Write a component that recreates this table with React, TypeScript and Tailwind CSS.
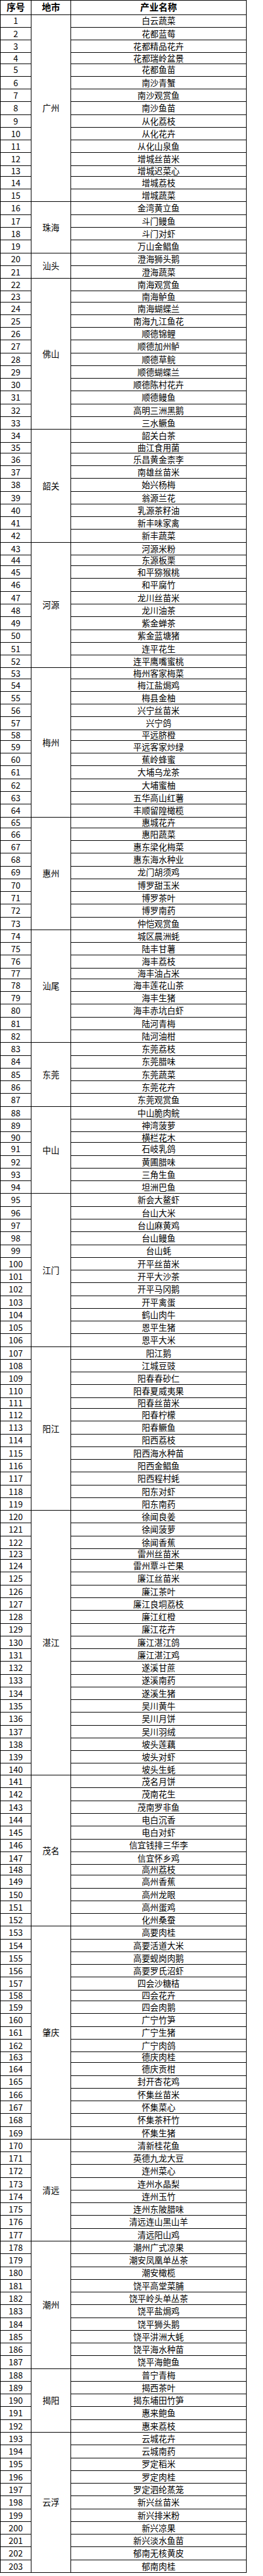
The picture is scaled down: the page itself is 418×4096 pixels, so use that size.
import React from "react";

type Group = { city: string; start: number; items: string[] };

const groups: Group[] = [
  { city: "广州", start: 1, items: ["白云蔬菜", "花都蓝莓", "花都精品花卉", "花都瑞岭盆景", "花都鱼苗", "南沙青蟹", "南沙观赏鱼", "南沙鱼苗", "从化荔枝", "从化花卉", "从化山泉鱼", "增城丝苗米", "增城迟菜心", "增城荔枝", "增城蔬菜"] },
  { city: "珠海", start: 16, items: ["金湾黄立鱼", "斗门鳗鱼", "斗门对虾", "万山金鲳鱼"] },
  { city: "汕头", start: 20, items: ["澄海狮头鹅", "澄海蔬菜"] },
  { city: "佛山", start: 22, items: ["南海观赏鱼", "南海鲈鱼", "南海蝴蝶兰", "南海九江鱼花", "顺德锦鲤", "顺德加州鲈", "顺德草鲩", "顺德蝴蝶兰", "顺德陈村花卉", "顺德鳗鱼", "高明三洲黑鹅", "三水鳜鱼"] },
  { city: "韶关", start: 34, items: ["韶关白茶", "曲江食用菌", "乐昌黄金柰李", "南雄丝苗米", "始兴杨梅", "翁源兰花", "乳源茶籽油", "新丰味家禽", "新丰蔬菜"] },
  { city: "河源", start: 43, items: ["河源米粉", "东源板栗", "和平猕猴桃", "和平腐竹", "龙川丝苗米", "龙川油茶", "紫金蝉茶", "紫金蓝塘猪", "连平花生", "连平鹰嘴蜜桃"] },
  { city: "梅州", start: 53, items: ["梅州客家梅菜", "梅江盐焗鸡", "梅县金柚", "兴宁丝苗米", "兴宁鸽", "平远脐橙", "平远客家炒绿", "蕉岭蜂蜜", "大埔乌龙茶", "大埔蜜柚", "五华高山红薯", "丰顺留隍橄榄"] },
  { city: "惠州", start: 65, items: ["惠城花卉", "惠阳蔬菜", "惠东梁化梅菜", "惠东海水种业", "龙门胡须鸡", "博罗甜玉米", "博罗茶叶", "博罗南药", "仲恺观赏鱼"] },
  { city: "汕尾", start: 74, items: ["城区晨洲蚝", "陆丰甘薯", "海丰荔枝", "海丰油占米", "海丰莲花山茶", "海丰生猪", "海丰赤坑白虾", "陆河青梅", "陆河油柑"] },
  { city: "东莞", start: 83, items: ["东莞荔枝", "东莞腊味", "东莞蔬菜", "东莞花卉", "东莞观赏鱼"] },
  { city: "中山", start: 88, items: ["中山脆肉鲩", "神湾菠萝", "横栏花木", "石岐乳鸽", "黄圃腊味", "三角生鱼", "坦洲巴鱼"] },
  { city: "江门", start: 95, items: ["新会大鳌虾", "台山大米", "台山麻黄鸡", "台山鳗鱼", "台山蚝", "开平丝苗米", "开平大沙茶", "开平马冈鹅", "开平禽蛋", "鹤山肉牛", "恩平生猪", "恩平大米"] },
  { city: "阳江", start: 107, items: ["阳江鹅", "江城豆豉", "阳春春砂仁", "阳春夏威夷果", "阳春丝苗米", "阳春柠檬", "阳春鳜鱼", "阳西荔枝", "阳西海水种苗", "阳西金鲳鱼", "阳西程村蚝", "阳东对虾", "阳东南药"] },
  { city: "湛江", start: 120, items: ["徐闻良姜", "徐闻菠萝", "徐闻香蕉", "雷州丝苗米", "雷州覃斗芒果", "廉江丝苗米", "廉江茶叶", "廉江良垌荔枝", "廉江红橙", "廉江花卉", "廉江湛江鸽", "廉江湛江鸡", "遂溪甘蔗", "遂溪南药", "遂溪生猪", "吴川黄牛", "吴川月饼", "吴川羽绒", "坡头莲藕", "坡头对虾", "坡头生蚝"] },
  { city: "茂名", start: 141, items: ["茂名月饼", "茂南花生", "茂南罗非鱼", "电白沉香", "电白对虾", "信宜钱排三华李", "信宜怀乡鸡", "高州荔枝", "高州香蕉", "高州龙眼", "高州蛋鸡", "化州桑蚕"] },
  { city: "肇庆", start: 153, items: ["高要肉桂", "高要活道大米", "高要蚬岗肉鹅", "高要罗氏沼虾", "四会沙糖桔", "四会花卉", "四会肉鹅", "广宁竹笋", "广宁生猪", "广宁肉鸽", "德庆肉桂", "德庆贡柑", "封开杏花鸡", "怀集丝苗米", "怀集菜心", "怀集茶秆竹", "怀集生猪"] },
  { city: "清远", start: 170, items: ["清新桂花鱼", "英德九龙大豆", "连州菜心", "连州水晶梨", "连州玉竹", "连州东陂腊味", "清远连山黑山羊", "清远阳山鸡"] },
  { city: "潮州", start: 178, items: ["潮州广式凉果", "潮安凤凰单丛茶", "潮安橄榄", "饶平高堂菜脯", "饶平岭头单丛茶", "饶平盐焗鸡", "饶平狮头鹅", "饶平汫洲大蚝", "饶平海水种苗", "饶平海鲍鱼"] },
  { city: "揭阳", start: 188, items: ["普宁青梅", "揭西茶叶", "揭东埔田竹笋", "惠来鲍鱼", "惠来荔枝"] },
  { city: "云浮", start: 193, items: ["云城花卉", "云城南药", "罗定稻米", "罗定肉桂", "罗定泗纶蒸笼", "新兴丝苗米", "新兴排米粉", "新兴凉果", "新兴淡水鱼苗", "郁南无核黄皮", "郁南肉桂"] },
];

const shortRows = new Set([4, 13, 23, 35, 44, 53, 58, 65, 77, 90, 111, 123, 148, 158, 163]);

function rowH(n: number): string {
  if (n === 140) return "h-[18.78px]";
  if (shortRows.has(n)) return "h-[17.27px]";
  return "h-[20.28px]";
}

const cell = "flex items-center justify-center border-r border-b border-black";

export default function App() {
  return (
    <div className="bg-white min-h-screen text-black [font-family:'Noto_Sans_CJK_SC','Noto_Sans',sans-serif]">
      <div className="w-[392px] border-l border-t border-black">
        <div className="flex h-[22.5px]">
          <div className={`${cell} w-[49px] text-[14.6px] font-bold leading-none`}>序号</div>
          <div className={`${cell} w-[63px] text-[14.6px] font-bold leading-none`}>地市</div>
          <div className={`${cell} w-[279px] text-[14.6px] font-bold leading-none`}>产业名称</div>
        </div>
        {groups.map((g) => (
          <div key={g.city} className="flex">
            <div className="flex flex-col w-[49px]">
              {g.items.map((_, i) => {
                const n = g.start + i;
                return (
                  <div key={n} className={`${cell} ${rowH(n)} text-[13.4px] leading-none`}>
                    {n}
                  </div>
                );
              })}
            </div>
            <div className={`${cell} w-[63px] text-[13.4px] leading-none`}>{g.city}</div>
            <div className="flex flex-col w-[279px]">
              {g.items.map((name, i) => {
                const n = g.start + i;
                return (
                  <div key={n} className={`${cell} ${rowH(n)} text-[13.4px] leading-none`}>
                    {name}
                  </div>
                );
              })}
            </div>
          </div>
        ))}
      </div>
    </div>
  );
}
